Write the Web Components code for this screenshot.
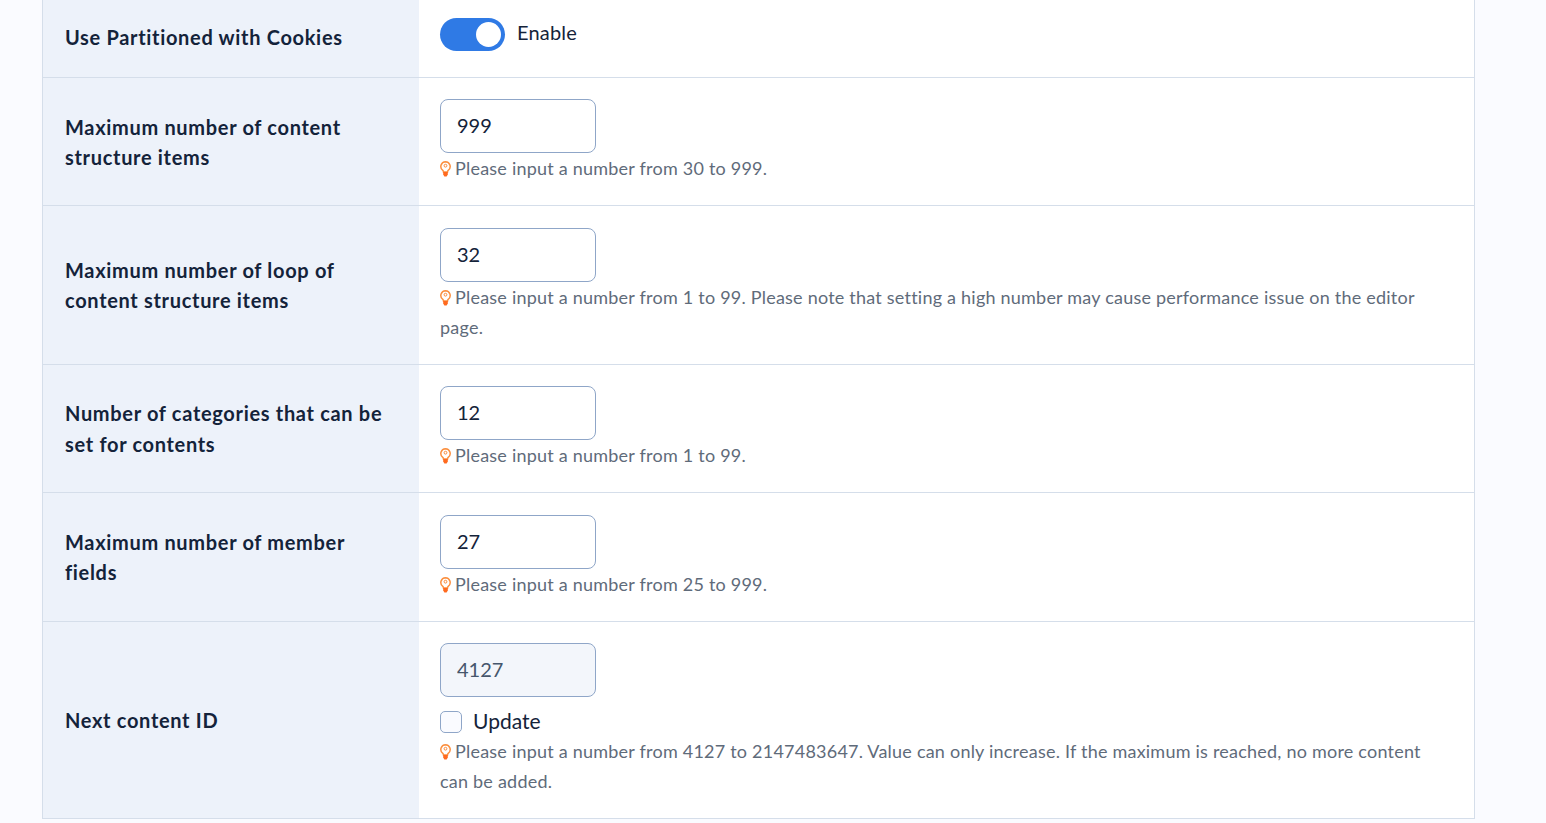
<!DOCTYPE html>
<html lang="en">
<head>
<meta charset="utf-8">
<title>Settings</title>
<style>
    html, body { margin: 0; height: 823px; overflow: hidden; background: #fafbff; }
    body { font-family: "Lato", "Liberation Sans", sans-serif; color: #14233a; }
</style>
</head>
<body>
<settings-table>
    <setting-row label="Use Partitioned with Cookies">
        <toggle-switch>Enable</toggle-switch>
    </setting-row>
    <setting-row label="Maximum number of content structure items">
        <number-field value="999"></number-field>
        <hint-text>Please input a number from 30 to 999.</hint-text>
    </setting-row>
    <setting-row label="Maximum number of loop of content structure items">
        <number-field value="32"></number-field>
        <hint-text>Please input a number from 1 to 99. Please note that setting a high number may cause performance issue on the editor page.</hint-text>
    </setting-row>
    <setting-row label="Number of categories that can be set for contents">
        <number-field value="12"></number-field>
        <hint-text>Please input a number from 1 to 99.</hint-text>
    </setting-row>
    <setting-row label="Maximum number of member fields">
        <number-field value="27"></number-field>
        <hint-text>Please input a number from 25 to 999.</hint-text>
    </setting-row>
    <setting-row label="Next content ID">
        <number-field value="4127" disabled></number-field>
        <check-box>Update</check-box>
        <hint-text>Please input a number from 4127 to 2147483647. Value can only increase. If the maximum is reached, no more content can be added.</hint-text>
    </setting-row>
</settings-table>

<script>
class SettingsTable extends HTMLElement {
    constructor() {
        super();
        this.attachShadow({ mode: 'open' });
    }

    connectedCallback() {
        this.shadowRoot.innerHTML = `
        <style>
            :host {
                display: block;
                margin: -4px 71px 0 42px;
                background: #fff;
                border: 1px solid #d5deea;
            }
        </style>
        <slot></slot>
        `;
    }
}

class SettingRow extends HTMLElement {
    constructor() {
        super();
        this.attachShadow({ mode: 'open' });
    }

    connectedCallback() {
        this.shadowRoot.innerHTML = `
        <style>
            :host {
                display: grid;
                grid-template-columns: 376px 1fr;
                border-bottom: 1px solid #d5deea;
            }
            :host(:last-child) { border-bottom: 0; }
            .label {
                display: flex;
                align-items: center;
                padding: 0 23px 0 22px;
                background: #edf2fa;
                font-size: 20px;
                font-weight: 700;
                letter-spacing: 0.68px;
                line-height: 30.2px;
                color: #14233a;
            }
            .value { padding: 21.2px 24px 21.7px 21px; }
        </style>
        <div class="label">${this.getAttribute("label")}</div>
        <div class="value"><slot></slot></div>
        `;
    }
}

class ToggleSwitch extends HTMLElement {
    constructor() {
        super();
        this.attachShadow({ mode: 'open' });
    }

    connectedCallback() {
        this.shadowRoot.innerHTML = `
        <style>
            :host {
                display: flex;
                align-items: flex-start;
                gap: 12px;
                height: 37.2px;
                font-size: 20px;
                letter-spacing: 0.2px;
                color: #14233a;
            }
            .track {
                width: 65px;
                height: 33px;
                box-sizing: border-box;
                padding: 4px;
                border-radius: 17px;
                background: #2f7ae5;
                display: flex;
                justify-content: flex-end;
            }
            .knob { width: 25px; height: 25px; border-radius: 50%; background: #fff; }
            .text { line-height: 30px; margin-top: -1px; }
        </style>
        <span class="track"><span class="knob"></span></span>
        <span class="text"><slot></slot></span>
        `;
    }
}

class NumberField extends HTMLElement {
    constructor() {
        super();
        this.attachShadow({ mode: 'open' });
    }

    connectedCallback() {
        const disabled = this.hasAttribute("disabled");
        this.shadowRoot.innerHTML = `
        <style>
            :host { display: block; }
            input {
                display: block;
                box-sizing: border-box;
                width: 156px;
                height: 54px;
                padding: 0 16px 2px;
                border: 1px solid #8fa6c8;
                border-radius: 8px;
                background: #fff;
                font: 20px "Lato", "Liberation Sans", sans-serif;
                color: #14233a;
                outline: none;
            }
            input:disabled { background: #f3f6fb; color: #46566c; }
        </style>
        <input type="text" value="${this.getAttribute("value")}" ${disabled ? "disabled" : ""}>
        `;
    }
}

class CheckBox extends HTMLElement {
    constructor() {
        super();
        this.attachShadow({ mode: 'open' });
    }

    connectedCallback() {
        this.shadowRoot.innerHTML = `
        <style>
            :host {
                display: flex;
                align-items: center;
                gap: 11px;
                height: 27.9px;
                margin: 11px 0 0;
                font-size: 21px;
                color: #14233a;
            }
            .box {
                width: 22px;
                height: 22px;
                box-sizing: border-box;
                border: 1px solid #8fa6c8;
                border-radius: 5px;
                background: #fafbff;
            }
            .text { margin-top: -2px; }
        </style>
        <span class="box"></span><span class="text"><slot></slot></span>
        `;
    }
}

class HintText extends HTMLElement {
    constructor() {
        super();
        this.attachShadow({ mode: 'open' });
    }

    connectedCallback() {
        this.shadowRoot.innerHTML = `
        <style>
            :host {
                display: block;
                font-size: 18px;
                letter-spacing: 0.22px;
                line-height: 30.4px;
                color: #5f6b7a;
            }
            svg { width: 11px; height: 16px; vertical-align: -2px; margin-right: 4px; }
        </style>
        <svg viewBox="0 0 11 16" fill="none">
            <path d="M5.500.8a4.700 4.700 0 0 0-2.700 8.500c.5.4.7 1 .7 1.700h4c0-.7.2-1.300.7-1.700A4.700 4.700 0 0 0 5.500.8z" stroke="#fb9040" stroke-width="1.500"/>
            <circle cx="5.500" cy="4.700" r="1.400" stroke="#f98a3c"/>
            <path d="M3.200 11h4.600v2.600L6.600 15.500H4.400L3.200 13.600z" fill="#ff6a1f"/>
        </svg><slot></slot>
        `;
    }
}

customElements.define("settings-table", SettingsTable);
customElements.define("setting-row", SettingRow);
customElements.define("toggle-switch", ToggleSwitch);
customElements.define("number-field", NumberField);
customElements.define("check-box", CheckBox);
customElements.define("hint-text", HintText);
</script>
</body>
</html>
